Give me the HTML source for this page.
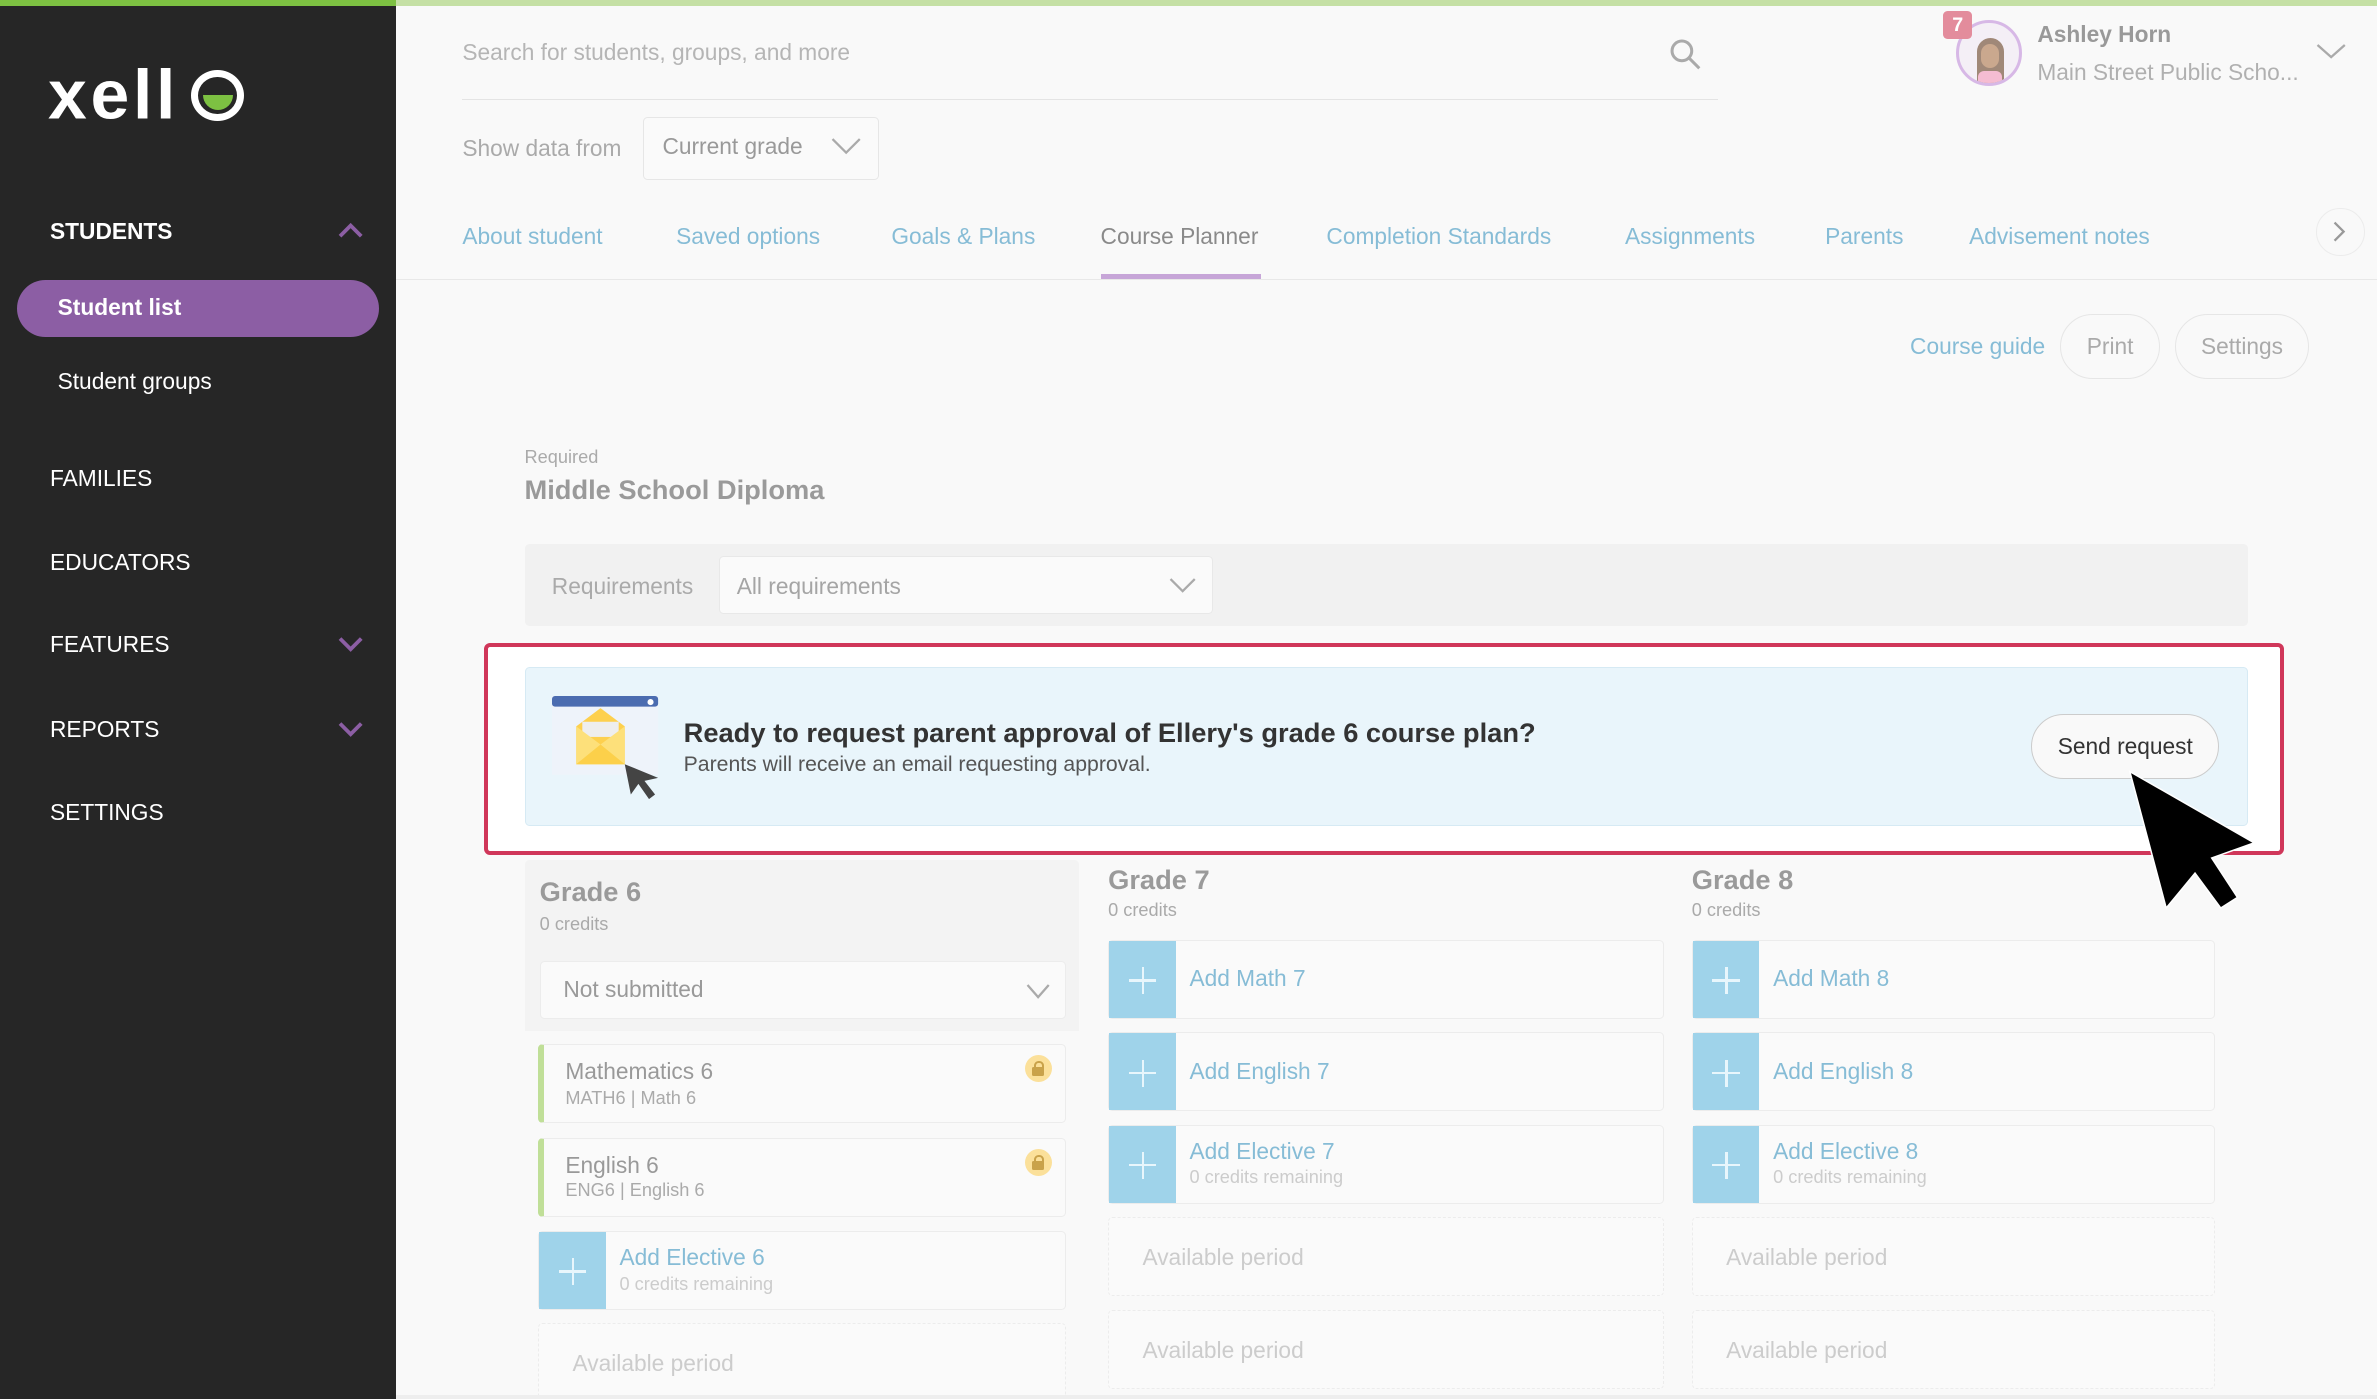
<!DOCTYPE html>
<html><head><meta charset="utf-8"><style>
*{box-sizing:border-box;margin:0;padding:0}
html,body{width:2377px;height:1399px;overflow:hidden;background:#f9f9f9}
#w{zoom:1.5159;width:1568px;height:923px;position:relative;font-family:"Liberation Sans",sans-serif;background:#f9f9f9;overflow:hidden}
.a{position:absolute;white-space:nowrap}
.side{position:absolute;left:0;top:0;width:261px;height:923px;background:#262626}
.nav{position:absolute;left:33px;color:#fff;font-size:15px}
.tab{position:absolute;top:147px;font-size:15px;color:#86bcd6}
.card{position:absolute;background:#fafafa;border:1px solid #ececec;border-radius:3px}
.plus{position:absolute;left:0;top:0;bottom:0;width:44px;background:#9fd3ea}
.plus:before{content:"";position:absolute;left:13px;top:50%;width:18px;height:1.5px;background:#e8f6fc}
.plus:after{content:"";position:absolute;left:21.5px;top:calc(50% - 8px);width:1.5px;height:18px;background:#e8f6fc}
.ct{position:absolute;left:53px;font-size:15px;color:#86bcd6}
.cs{position:absolute;left:53px;font-size:12px;color:#ccc}
.av{position:absolute;font-size:15px;color:#ccc;left:22px}
.gt{position:absolute;font-size:18px;font-weight:bold;color:#9a9a9a}
.gc{position:absolute;font-size:12px;color:#aaa}
.lock{position:absolute;left:317px;top:6px;width:18px;height:18px;background:#fbe09a;border-radius:50%}
.lock:before{content:"";position:absolute;left:6px;top:4px;width:4px;height:4px;border:1.5px solid #c9a24a;border-bottom:none;border-radius:3px 3px 0 0}
.lock:after{content:"";position:absolute;left:5px;top:8px;width:8px;height:6px;background:#c9a24a;border-radius:1px}
</style></head><body><div id="w">
<div class="a" style="left:0;top:0;width:1568px;height:4px;background:#c5e0a5"></div>
<div class="side">
<div class="a" style="left:0;top:0;width:261px;height:4px;background:#7dc142"></div>
<svg class="a" style="left:30px;top:36px" width="100" height="50"><text x="2" y="42" font-family="Liberation Sans" font-weight="bold" font-size="46" fill="#fff" textLength="84" lengthAdjust="spacing">xell</text></svg>
<div class="a" style="left:126px;top:46px;width:35px;height:34px;border:5px solid #fff;border-radius:50%;overflow:hidden"><div style="position:absolute;left:3px;right:3px;top:12px;height:10px;background:#7dc142;border-radius:0 0 12px 12px"></div></div>
<div class="nav" style="top:144px;font-weight:bold">STUDENTS</div>
<svg class="a" style="left:222px;top:146px" width="18" height="12"><path d="M2 10L9 3L16 10" stroke="#8c5ea4" stroke-width="2.5" fill="none"/></svg>
<div class="a" style="left:11px;top:185px;width:239px;height:37px;background:#8c5ea4;border-radius:19px"></div>
<div class="nav" style="left:38px;top:194px;font-weight:bold">Student list</div>
<div class="nav" style="left:38px;top:243px">Student groups</div>
<div class="nav" style="top:307px">FAMILIES</div>
<div class="nav" style="top:362px">EDUCATORS</div>
<div class="nav" style="top:416px">FEATURES</div>
<svg class="a" style="left:222px;top:418px" width="18" height="12"><path d="M2 3L9 10L16 3" stroke="#8c5ea4" stroke-width="2.5" fill="none"/></svg>
<div class="nav" style="top:472px">REPORTS</div>
<svg class="a" style="left:222px;top:474px" width="18" height="12"><path d="M2 3L9 10L16 3" stroke="#8c5ea4" stroke-width="2.5" fill="none"/></svg>
<div class="nav" style="top:527px">SETTINGS</div>
</div>
<div class="a" style="left:305px;top:26px;font-size:15px;color:#b5b5b5">Search for students, groups, and more</div>
<svg class="a" style="left:1101px;top:25px" width="22" height="22"><circle cx="8.5" cy="8.5" r="6.5" stroke="#aaa" stroke-width="2" fill="none"/><path d="M13 13L20 20" stroke="#aaa" stroke-width="2"/></svg>
<div class="a" style="left:305px;top:65px;width:828px;height:1px;background:#e4e4e4"></div>
<div class="a" style="left:305px;top:89px;font-size:15px;color:#aaa">Show data from</div>
<div class="a" style="left:424px;top:77px;width:156px;height:42px;border:1px solid #e6e6e6;border-radius:3px;background:#fafafa"></div>
<div class="a" style="left:437px;top:88px;font-size:15px;color:#999">Current grade</div>
<svg class="a" style="left:548px;top:90px" width="20" height="14"><path d="M1 2L10 11L19 2" stroke="#aaa" stroke-width="1.5" fill="none"/></svg>
<div class="a" style="left:1290px;top:13px;width:44px;height:44px;border:2px solid #d7b8e6;border-radius:50%;background:#f4eff6;overflow:hidden"><div style="position:absolute;left:12px;top:10px;width:18px;height:30px;background:#a08878;border-radius:9px 9px 0 0"></div><div style="position:absolute;left:15px;top:14px;width:12px;height:16px;background:#caa88e;border-radius:6px"></div><div style="position:absolute;left:13px;top:32px;width:16px;height:10px;background:#f5bcd2;border-radius:4px 4px 0 0"></div></div>
<div class="a" style="left:1282px;top:7px;width:19px;height:19px;background:#e38c9c;border-radius:3px;color:#fff;font-size:13px;font-weight:bold;text-align:center;line-height:19px">7</div>
<div class="a" style="left:1344px;top:14px;font-size:15px;font-weight:bold;color:#999">Ashley Horn</div>
<div class="a" style="left:1344px;top:39px;font-size:15px;color:#b0b0b0">Main Street Public Scho...</div>
<svg class="a" style="left:1528px;top:28px" width="20" height="14"><path d="M1 2L10 10L19 2" stroke="#aaa" stroke-width="1.5" fill="none"/></svg>
<div class="tab" style="left:305px">About student</div>
<div class="tab" style="left:446px">Saved options</div>
<div class="tab" style="left:588px">Goals &amp; Plans</div>
<div class="tab" style="left:726px;color:#8a8a8a">Course Planner</div>
<div class="a" style="left:726px;top:181px;width:106px;height:3px;background:#c7a6d8"></div>
<div class="tab" style="left:875px">Completion Standards</div>
<div class="tab" style="left:1072px">Assignments</div>
<div class="tab" style="left:1204px">Parents</div>
<div class="tab" style="left:1299px">Advisement notes</div>
<div class="a" style="left:1528px;top:137px;width:32px;height:32px;border:1px solid #ececec;border-radius:50%"></div>
<svg class="a" style="left:1537px;top:146px" width="12" height="14"><path d="M3 1L9 7L3 13" stroke="#999" stroke-width="1.5" fill="none"/></svg>
<div class="a" style="left:261px;top:184px;width:1307px;height:1px;background:#e8e8e8"></div>
<div class="a" style="left:1260px;top:220px;font-size:15px;color:#86bcd6">Course guide</div>
<div class="a" style="left:1359px;top:207px;width:66px;height:43px;border:1px solid #e6e6e6;border-radius:22px;font-size:15px;color:#aaa;text-align:center;line-height:41px">Print</div>
<div class="a" style="left:1435px;top:207px;width:88px;height:43px;border:1px solid #e6e6e6;border-radius:22px;font-size:15px;color:#aaa;text-align:center;line-height:41px">Settings</div>
<div class="a" style="left:346px;top:295px;font-size:12px;color:#aaa">Required</div>
<div class="a" style="left:346px;top:313px;font-size:18px;font-weight:bold;color:#9a9a9a">Middle School Diploma</div>
<div class="a" style="left:346px;top:359px;width:1137px;height:54px;background:#f1f1f1;border-radius:3px"></div>
<div class="a" style="left:364px;top:378px;font-size:15px;color:#aaa">Requirements</div>
<div class="a" style="left:474px;top:367px;width:326px;height:38px;background:#fafafa;border:1px solid #e8e8e8;border-radius:3px"></div>
<div class="a" style="left:486px;top:378px;font-size:15px;color:#a5a5a5">All requirements</div>
<svg class="a" style="left:771px;top:380px" width="18" height="12"><path d="M1 2L9 10L17 2" stroke="#aaa" stroke-width="1.5" fill="none"/></svg>
<div class="a" style="left:319px;top:424px;width:1188px;height:140px;background:#fff;border:3px solid #d0375a;border-radius:4px"></div>
<div class="a" style="left:346px;top:440px;width:1137px;height:105px;background:#e9f5fb;border:1px solid #d6eaf4;border-radius:3px"></div>
<svg class="a" style="left:364px;top:459px" width="72" height="68" viewBox="0 0 72 68">
<rect x="0" y="0" width="70" height="52" fill="#eef3fa"/><rect x="0" y="0" width="70" height="7" rx="2" fill="#4b6cb0"/><circle cx="65" cy="4" r="2" fill="#fff"/>
<path d="M16 20L32 8L48 20V45H16Z" fill="#fdd04e"/><rect x="20" y="17" width="24" height="10" fill="#eee"/><path d="M16 20L32 32L48 20V45H16Z" fill="#fde07a"/><path d="M16 45L32 32L48 45Z" fill="#fcd04a"/>
<path d="M48 45L52 65L57 58L64 68L68 65L61 56L70 54Z" fill="#444"/></svg>
<div class="a" style="left:451px;top:473px;font-size:18px;font-weight:bold;color:#333">Ready to request parent approval of Ellery's grade 6 course plan?</div>
<div class="a" style="left:451px;top:497px;font-size:14px;color:#555">Parents will receive an email requesting approval.</div>
<div class="a" style="left:1340px;top:471px;width:124px;height:43px;background:#f9f9f9;border:1px solid #ccc;border-radius:22px;font-size:15px;color:#333;text-align:center;line-height:41px">Send request</div>
<div class="a" style="left:346px;top:567px;width:366px;height:113px;background:#f3f3f3;border-radius:3px 3px 0 0"></div>
<div class="gt" style="left:356px;top:578px">Grade 6</div>
<div class="gc" style="left:356px;top:603px">0 credits</div>
<div class="card" style="left:356px;top:634px;width:347px;height:38px;background:#fafafa"><div class="a" style="left:15px;top:9px;font-size:15px;color:#999">Not submitted</div><svg class="a" style="left:320px;top:13px" width="16" height="12"><path d="M1 2L8 10L15 2" stroke="#aaa" stroke-width="1.5" fill="none"/></svg></div>
<div class="card" style="left:355px;top:689px;width:348px;height:52px;border-left:4px solid #c0df98"><div class="a" style="left:14px;top:8px;font-size:15px;color:#999">Mathematics 6</div><div class="a" style="left:14px;top:28px;font-size:12px;color:#aaa">MATH6 | Math 6</div><div class="lock"></div></div>
<div class="card" style="left:355px;top:751px;width:348px;height:52px;border-left:4px solid #c0df98"><div class="a" style="left:14px;top:8px;font-size:15px;color:#999">English 6</div><div class="a" style="left:14px;top:27px;font-size:12px;color:#aaa">ENG6 | English 6</div><div class="lock"></div></div>
<div class="card" style="left:355px;top:812px;width:348px;height:52px"><div class="plus"></div><div class="ct" style="top:8px">Add Elective 6</div><div class="cs" style="top:28px">0 credits remaining</div></div>
<div class="card" style="left:355px;top:873px;width:348px;height:52px;border-style:dashed"><div class="av" style="top:17px">Available period</div></div>
<div class="gt" style="left:731px;top:570px">Grade 7</div>
<div class="gc" style="left:731px;top:594px">0 credits</div>
<div class="card" style="left:731px;top:620px;width:367px;height:52px"><div class="plus"></div><div class="ct" style="top:16px">Add Math 7</div></div>
<div class="card" style="left:731px;top:681px;width:367px;height:52px"><div class="plus"></div><div class="ct" style="top:16px">Add English 7</div></div>
<div class="card" style="left:731px;top:742px;width:367px;height:52px"><div class="plus"></div><div class="ct" style="top:8px">Add Elective 7</div><div class="cs" style="top:27px">0 credits remaining</div></div>
<div class="card" style="left:731px;top:803px;width:367px;height:52px;border-style:dashed"><div class="av" style="top:17px">Available period</div></div>
<div class="card" style="left:731px;top:864px;width:367px;height:52px;border-style:dashed"><div class="av" style="top:17px">Available period</div></div>
<div class="gt" style="left:1116px;top:570px">Grade 8</div>
<div class="gc" style="left:1116px;top:594px">0 credits</div>
<div class="card" style="left:1116px;top:620px;width:345px;height:52px"><div class="plus"></div><div class="ct" style="top:16px">Add Math 8</div></div>
<div class="card" style="left:1116px;top:681px;width:345px;height:52px"><div class="plus"></div><div class="ct" style="top:16px">Add English 8</div></div>
<div class="card" style="left:1116px;top:742px;width:345px;height:52px"><div class="plus"></div><div class="ct" style="top:8px">Add Elective 8</div><div class="cs" style="top:27px">0 credits remaining</div></div>
<div class="card" style="left:1116px;top:803px;width:345px;height:52px;border-style:dashed"><div class="av" style="top:17px">Available period</div></div>
<div class="card" style="left:1116px;top:864px;width:345px;height:52px;border-style:dashed"><div class="av" style="top:17px">Available period</div></div>
<div class="a" style="left:261px;top:920px;width:1307px;height:3px;background:#eee"></div>
<svg class="a" style="left:0;top:0" width="1568" height="923"><path d="M1405 509L1487 556L1459 566L1476 592L1465 599L1448 576L1429 599Z" fill="#000" stroke="#fff" stroke-width="1"/></svg>
</div></body></html>
